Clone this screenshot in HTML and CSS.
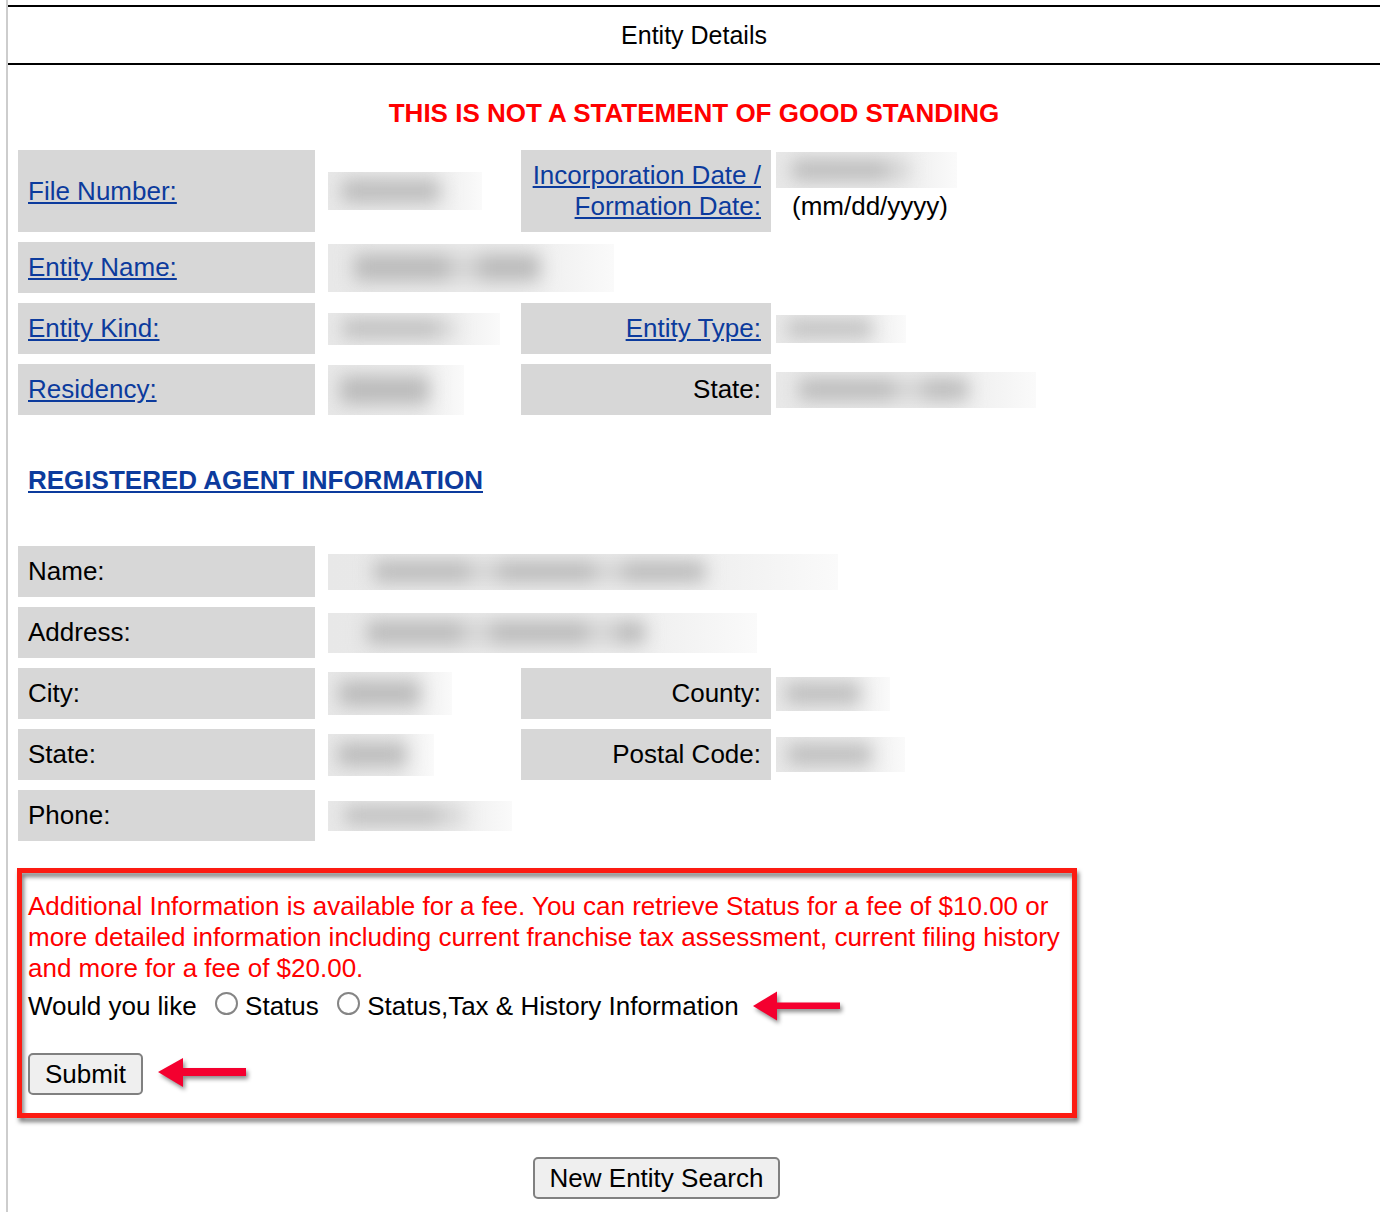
FILE: index.html
```html
<!DOCTYPE html>
<html lang="en">

<head>
    <meta charset="UTF-8">
    <title>Entity Details</title>
    <link rel="stylesheet" href="styles.css">
</head>

<body>
    <div class="page">

        <div class="title-bar">Entity Details</div>

        <h3 class="warning">THIS IS NOT A STATEMENT OF GOOD STANDING</h3>

        <!-- entity summary -->
        <table class="details">
            <colgroup>
                <col class="c-label">
                <col class="c-value">
                <col class="c-label2">
                <col class="c-value2">
            </colgroup>
            <tr>
                <td class="label"><a href="#">File Number:</a></td>
                <td class="value"><span class="redact" style="width:154px;height:38px"><i></i></span></td>
                <td class="label right"><a href="#">Incorporation Date /<br>Formation Date:</a></td>
                <td class="value2 top">
                    <span class="redact date" style="width:181px;height:36px"><i></i></span>
                    <span class="date-hint">(mm/dd/yyyy)</span>
                </td>
            </tr>
            <tr>
                <td class="label"><a href="#">Entity Name:</a></td>
                <td class="value" colspan="3"><span class="redact" style="width:286px;height:48px"><i></i></span></td>
            </tr>
            <tr>
                <td class="label"><a href="#">Entity Kind:</a></td>
                <td class="value"><span class="redact" style="width:172px;height:32px"><i></i></span></td>
                <td class="label right"><a href="#">Entity Type:</a></td>
                <td class="value2"><span class="redact" style="width:130px;height:28px"><i></i></span></td>
            </tr>
            <tr>
                <td class="label"><a href="#">Residency:</a></td>
                <td class="value"><span class="redact" style="width:136px;height:50px"><i></i></span></td>
                <td class="label right">State:</td>
                <td class="value2"><span class="redact" style="width:260px;height:36px"><i></i></span></td>
            </tr>
        </table>

        <h3 class="agent-title"><a href="#">REGISTERED AGENT INFORMATION</a></h3>

        <!-- registered agent -->
        <table class="details agent">
            <colgroup>
                <col class="c-label">
                <col class="c-value">
                <col class="c-label2">
                <col class="c-value2">
            </colgroup>
            <tr>
                <td class="label">Name:</td>
                <td class="value" colspan="3"><span class="redact" style="width:510px;height:36px"><i></i></span></td>
            </tr>
            <tr>
                <td class="label">Address:</td>
                <td class="value" colspan="3"><span class="redact" style="width:429px;height:40px"><i></i></span></td>
            </tr>
            <tr>
                <td class="label">City:</td>
                <td class="value"><span class="redact" style="width:124px;height:43px"><i></i></span></td>
                <td class="label right">County:</td>
                <td class="value2"><span class="redact" style="width:114px;height:34px"><i></i></span></td>
            </tr>
            <tr>
                <td class="label">State:</td>
                <td class="value"><span class="redact" style="width:106px;height:42px"><i></i></span></td>
                <td class="label right">Postal Code:</td>
                <td class="value2"><span class="redact" style="width:129px;height:35px"><i></i></span></td>
            </tr>
            <tr>
                <td class="label">Phone:</td>
                <td class="value" colspan="3"><span class="redact" style="width:184px;height:30px"><i></i></span></td>
            </tr>
        </table>

        <!-- paid information form -->
        <form class="fee-box" onsubmit="return false">
            <p class="fee-text">Additional Information is available for a fee. You can retrieve Status for a fee of $10.00 or more detailed information including current franchise tax assessment, current filing history and more for a fee of $20.00.</p>
            <div class="choice">
                Would you like <input type="radio" name="level" value="status"> Status <input type="radio" name="level" value="full"> Status,Tax &amp; History Information
            </div>
            <button class="btn submit" type="submit">Submit</button>

            <svg class="arrow arrow-choice" width="92" height="34" viewBox="0 0 92 34">
                <polygon points="1,16 25,1.5 25,30.5" />
                <rect x="24" y="12.5" width="64" height="6.5" />
            </svg>
            <svg class="arrow arrow-submit" width="94" height="36" viewBox="0 0 94 36">
                <polygon points="1,16 26,2 26,31" />
                <rect x="25" y="12" width="64" height="8" />
            </svg>
        </form>

        <div class="search-again">
            <button class="btn" type="button">New Entity Search</button>
        </div>

    </div>
</body>

</html>
```

FILE: styles.css
```css
body {
    margin: 0;
    font-family: "Liberation Sans", Arial, sans-serif;
    font-size: 26px;
    line-height: 31px;
    color: #000;
    background: #fff;
}

a {
    color: #0c3b9d;
}

.page {
    margin: 0 10px 0 6px;
    padding-top: 5px;
    min-height: 1207px;
    border-left: 2px solid #cdcdcd;
}

.title-bar {
    height: 56px;
    line-height: 56px;
    font-size: 25px;
    text-align: center;
    border-top: 2px solid #000;
    border-bottom: 2px solid #000;
}

.warning {
    margin: 33px 0 0;
    font-size: 26px;
    line-height: 31px;
    text-align: center;
    color: #ff0000;
}

/* label / value grid */
.details {
    margin-top: 11px;
    border-spacing: 10px;
    table-layout: fixed;
    width: 1183px;
}

.c-label {
    width: 297px;
}

.c-value {
    width: 186px;
}

.c-label2 {
    width: 250px;
}

.c-value2 {
    width: 400px;
}

.details td {
    padding: 10px;
    vertical-align: middle;
}

.details td.label {
    background: #d7d7d7;
}

.details td.right {
    text-align: right;
}

.details td.value {
    padding: 0 0 0 3px;
}

.details td.value2 {
    padding: 0;
}

.details td.top {
    vertical-align: top;
    padding-top: 2px;
}

.value2 .redact {
    margin-left: -5px;
}

.redact.date {
    margin-bottom: 3px;
}

.date-hint {
    padding-left: 11px;
}

/* hidden values */
.redact {
    display: block;
    position: relative;
    overflow: hidden;
    background: linear-gradient(90deg, #e8e8e8, #ebebeb 65%, #fafafa);
}

.redact i {
    position: absolute;
    left: 9%;
    right: 26%;
    top: 22%;
    bottom: 22%;
    background: repeating-linear-gradient(90deg, #bababa 0 95px, #d4d4d4 95px 125px);
    filter: blur(9px);
}

.agent-title {
    margin: 40px 0 0;
    padding-left: 20px;
    font-size: 26px;
    line-height: 31px;
}

.agent {
    margin-top: 40px;
}

/* fee section */
.fee-box {
    position: relative;
    box-sizing: border-box;
    width: 1060px;
    height: 250px;
    margin: 17px 0 0 9px;
    padding: 23px 0 0 11px;
}

.fee-box::after {
    content: "";
    position: absolute;
    left: 0;
    top: 0;
    right: 0;
    bottom: 0;
    border: 5px solid #fc1b12;
    filter: drop-shadow(2px 4px 2px rgba(0, 0, 0, 0.5));
    pointer-events: none;
}

.fee-text {
    margin: 0;
    color: #ff0000;
}

.choice {
    margin-top: 7px;
}

.choice input {
    appearance: none;
    -webkit-appearance: none;
    box-sizing: border-box;
    width: 23px;
    height: 23px;
    margin: 0 0 0 11px;
    border: 2px solid #858585;
    border-radius: 50%;
    background: #fff;
    vertical-align: 0;
}

.btn {
    font-family: inherit;
    font-size: 26px;
    line-height: 32px;
    padding: 3px 15px;
    color: #000;
    background: #efefef;
    border: 2px solid #808080;
    border-radius: 5px;
}

.submit {
    display: block;
    margin-top: 31px;
}

.arrow {
    position: absolute;
    fill: #f4002f;
    filter: drop-shadow(2px 3px 2px rgba(0, 0, 0, 0.45));
}

.arrow-choice {
    left: 735px;
    top: 122px;
}

.arrow-submit {
    left: 140px;
    top: 188px;
}

.search-again {
    width: 1297px;
    margin-top: 39px;
    text-align: center;
}
```
